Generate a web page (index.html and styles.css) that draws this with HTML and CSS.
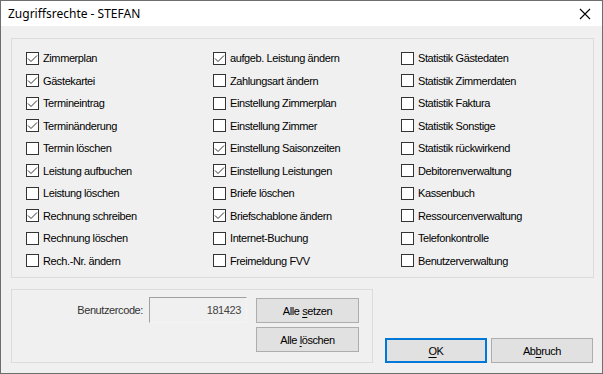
FILE: index.html
```html
<!DOCTYPE html>
<html lang="de">

<head>
    <meta charset="UTF-8">
    <title>Zugriffsrechte - STEFAN</title>
    <link rel="stylesheet" href="styles.css">
</head>

<body>

    <div class="dialog">
        <div class="titlebar">
            <span class="title">Zugriffsrechte - STEFAN</span>
            <svg class="close" width="12" height="12" viewBox="0 0 12 12">
                <path d="M1 1 L11 11 M11 1 L1 11" stroke="#000" stroke-width="1.1" fill="none" />
            </svg>
        </div>

        <div class="content">
            <div class="group rights">
                <div class="col">
                    <label class="check checked"><span class="box"></span>Zimmerplan</label>
                    <label class="check checked"><span class="box"></span>Gästekartei</label>
                    <label class="check checked"><span class="box"></span>Termineintrag</label>
                    <label class="check checked"><span class="box"></span>Terminänderung</label>
                    <label class="check"><span class="box"></span>Termin löschen</label>
                    <label class="check checked"><span class="box"></span>Leistung aufbuchen</label>
                    <label class="check"><span class="box"></span>Leistung löschen</label>
                    <label class="check checked"><span class="box"></span>Rechnung schreiben</label>
                    <label class="check"><span class="box"></span>Rechnung löschen</label>
                    <label class="check"><span class="box"></span>Rech.-Nr. ändern</label>
                </div>
                <div class="col">
                    <label class="check checked"><span class="box"></span>aufgeb. Leistung ändern</label>
                    <label class="check"><span class="box"></span>Zahlungsart ändern</label>
                    <label class="check"><span class="box"></span>Einstellung Zimmerplan</label>
                    <label class="check"><span class="box"></span>Einstellung Zimmer</label>
                    <label class="check checked"><span class="box"></span>Einstellung Saisonzeiten</label>
                    <label class="check checked"><span class="box"></span>Einstellung Leistungen</label>
                    <label class="check"><span class="box"></span>Briefe löschen</label>
                    <label class="check checked"><span class="box"></span>Briefschablone ändern</label>
                    <label class="check"><span class="box"></span>Internet-Buchung</label>
                    <label class="check"><span class="box"></span>Freimeldung FVV</label>
                </div>
                <div class="col">
                    <label class="check"><span class="box"></span>Statistik Gästedaten</label>
                    <label class="check"><span class="box"></span>Statistik Zimmerdaten</label>
                    <label class="check"><span class="box"></span>Statistik Faktura</label>
                    <label class="check"><span class="box"></span>Statistik Sonstige</label>
                    <label class="check"><span class="box"></span>Statistik rückwirkend</label>
                    <label class="check"><span class="box"></span>Debitorenverwaltung</label>
                    <label class="check"><span class="box"></span>Kassenbuch</label>
                    <label class="check"><span class="box"></span>Ressourcenverwaltung</label>
                    <label class="check"><span class="box"></span>Telefonkontrolle</label>
                    <label class="check"><span class="box"></span>Benutzerverwaltung</label>
                </div>
            </div>

            <div class="bottom">
                <div class="group code">
                    <span class="code-label">Benutzercode:</span>
                    <div class="code-field">181423</div>
                    <div class="code-buttons">
                        <button class="btn">Alle <u>s</u>etzen</button>
                        <button class="btn">Alle <u>l</u>öschen</button>
                    </div>
                </div>
                <div class="dialog-buttons">
                    <button class="btn default"><u>O</u>K</button>
                    <button class="btn">Ab<u>b</u>ruch</button>
                </div>
            </div>
        </div>
    </div>

</body>

</html>
```
FILE: styles.css
```css
body {
    margin: 0;
    padding: 0;
    font-family: 'Liberation Sans', Arial, sans-serif;
    font-size: 11px;
    letter-spacing: -0.4px;
    color: #000;
}

.dialog {
    width: 603px;
    height: 374px;
    box-sizing: border-box;
    border: 1px solid #6e6e6e;
    background-color: #f0f0f0;
    display: flex;
    flex-direction: column;
}

.titlebar {
    height: 25px;
    background-color: #fff;
    display: flex;
    align-items: center;
    justify-content: space-between;
    padding: 0 11px 0 7px;
}

.title {
    font-family: 'Noto Sans', sans-serif;
    font-size: 12px;
    letter-spacing: 0;
}

.close {
    display: block;
}

.content {
    flex: 1;
    padding: 12px 8px 10px 10px;
    display: flex;
    flex-direction: column;
}

.group {
    border: 1px solid #dcdcdc;
    box-sizing: border-box;
}

.rights {
    height: 240px;
    padding: 8px 0 5px 14px;
    display: grid;
    grid-template-columns: 187px 188px 1fr;
}

.col {
    display: flex;
    flex-direction: column;
}

.check {
    height: 22.5px;
    display: flex;
    align-items: center;
    gap: 4px;
}

.box {
    width: 13px;
    height: 13px;
    box-sizing: border-box;
    border: 1px solid #333;
    background-color: #fff;
    flex-shrink: 0;
}

.check.checked .box {
    background: #fff url("data:image/svg+xml,%3Csvg xmlns='http://www.w3.org/2000/svg' width='11' height='11'%3E%3Cpath d='M1 5.5 L4 8.5 L10 2.5' stroke='%23333' stroke-width='1' fill='none'/%3E%3C/svg%3E") no-repeat center;
}

.bottom {
    margin-top: 11px;
    display: flex;
    align-items: flex-end;
    gap: 12px;
}

.code {
    width: 362px;
    height: 74px;
    display: flex;
    align-items: flex-start;
    padding-top: 7px;
}

.code-label {
    width: 131px;
    height: 26px;
    line-height: 26px;
    text-align: right;
    color: #333;
}

.code-field {
    width: 98px;
    height: 26px;
    box-sizing: border-box;
    margin-left: 6px;
    border-top: 1px solid #a0a0a0;
    border-left: 1px solid #a0a0a0;
    border-right: 1px solid #f4f4f4;
    border-bottom: 1px solid #f4f4f4;
    text-align: right;
    line-height: 24px;
    padding-right: 5px;
    color: #444;
}

.code-buttons {
    margin-left: 9px;
    margin-top: 1px;
    display: flex;
    flex-direction: column;
    gap: 4px;
}

.btn {
    width: 103px;
    height: 25px;
    box-sizing: border-box;
    border: 1px solid #adadad;
    background-color: #e1e1e1;
    font-family: inherit;
    font-size: 11px;
    letter-spacing: -0.4px;
    color: #000;
    padding: 0;
}

.btn u {
    text-underline-offset: 2px;
}

.dialog-buttons {
    display: flex;
    gap: 4px;
}

.dialog-buttons .btn {
    width: 102px;
}

.btn.default {
    border: 2px solid #0078d7;
}
```
